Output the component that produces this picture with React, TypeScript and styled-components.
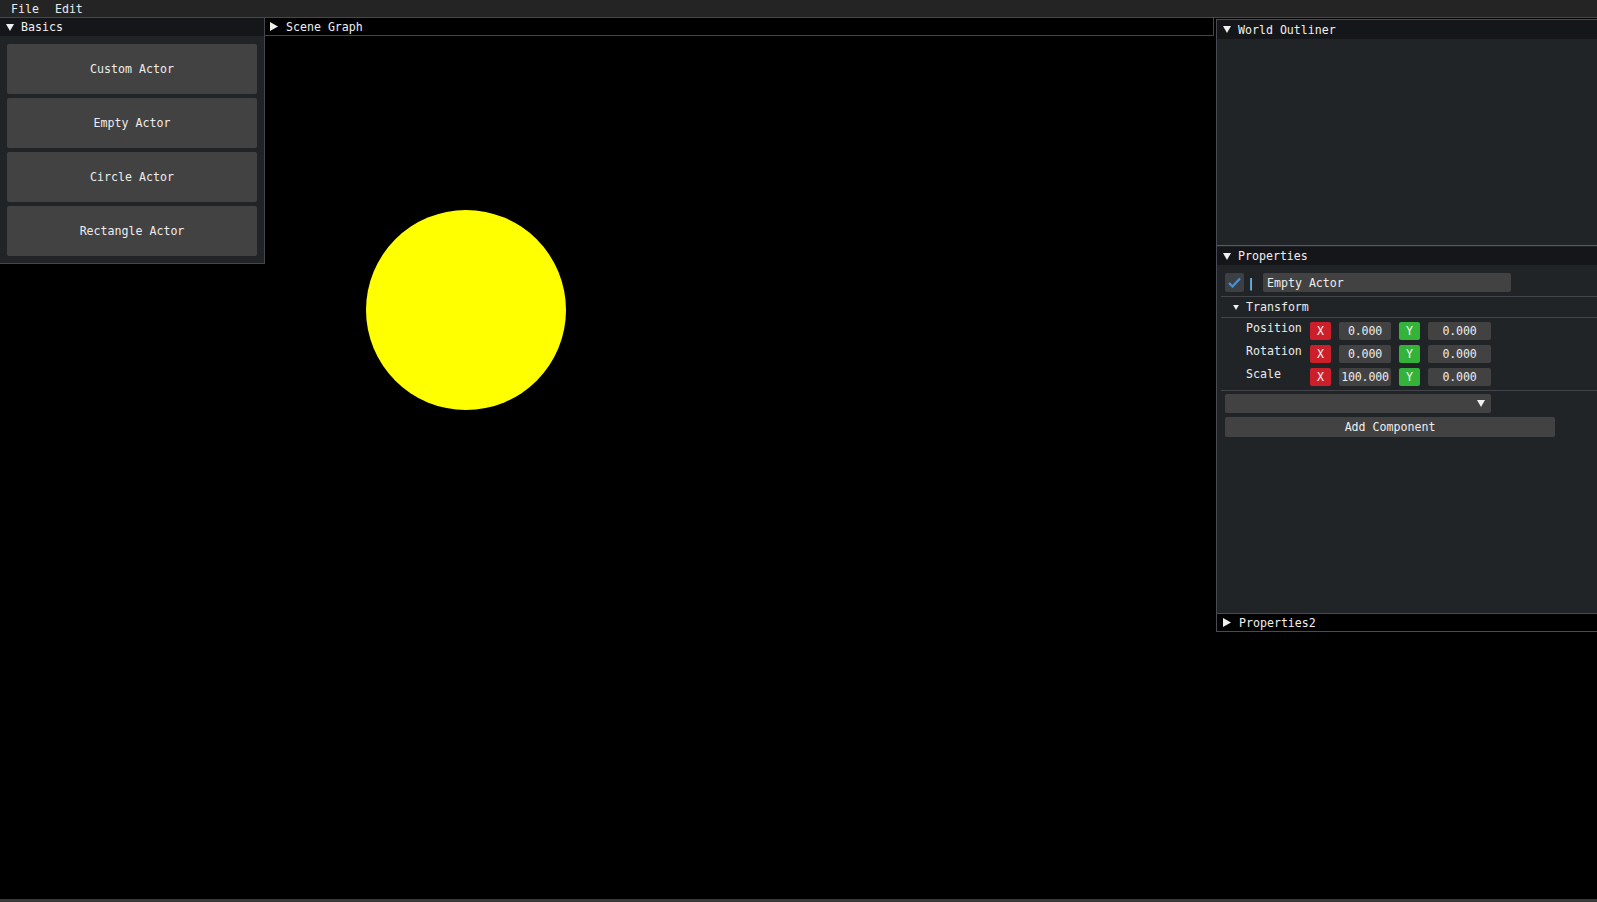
import React from "react";
import styled, { createGlobalStyle } from "styled-components";

const GlobalStyle = createGlobalStyle`
  html, body { margin: 0; padding: 0; background: #000; }
  body { font-family: "DejaVu Sans Mono", "Liberation Mono", monospace; font-size: 11.6px; color: #ebebeb; }
  * { box-sizing: border-box; }
`;

const Screen = styled.div`
  width: 1597px;
  height: 902px;
  display: flex;
  flex-direction: column;
  overflow: hidden;
  background: #000;
`;

const MenuBar = styled.div`
  height: 18px;
  flex: none;
  background: #242424;
  border-bottom: 1px solid #484848;
  display: flex;
  align-items: center;
  padding: 1px 0 0 11px;
  gap: 16px;
  line-height: 16px;
`;

const MenuItem = styled.span`
  color: #ebebeb;
`;

const Desktop = styled.div`
  flex: 1;
  position: relative;
  background: #000;
  display: flex;
  align-items: flex-start;
`;

const Sun = styled.div`
  position: absolute;
  left: 366px;
  top: 192px;
  width: 200px;
  height: 200px;
  border-radius: 50%;
  background: #ffff00;
`;

const Window = styled.div<{ $w: number; $h?: number; $bg?: string }>`
  width: ${(p) => p.$w}px;
  height: ${(p) => (p.$h ? `${p.$h}px` : "auto")};
  flex: none;
  display: flex;
  flex-direction: column;
  background: ${(p) => p.$bg || "#212427"};
  border-right: 1px solid #45454c;
  border-bottom: 1px solid #45454c;
  position: relative;
  z-index: 1;
`;

const TitleBar = styled.div<{ $bg?: string; $h?: number }>`
  height: ${(p) => p.$h ?? 18}px;
  flex: none;
  display: flex;
  align-items: center;
  gap: 7px;
  padding-left: 6px;
  background: ${(p) => p.$bg || "#151619"};
  color: #f0f0f0;
  white-space: nowrap;
`;

const ButtonList = styled.div`
  display: flex;
  flex-direction: column;
  gap: 4px;
  padding: 8px 7px 6px 7px;
`;

const BigButton = styled.div`
  height: 50px;
  background: #424242;
  border-radius: 2px;
  display: flex;
  align-items: center;
  justify-content: center;
  color: #ededed;
`;

const RightColumn = styled.div`
  margin-left: 2px;
  margin-top: 1px;
  display: flex;
  flex-direction: column;
  width: 381px;
  flex: none;
`;

const Panel = styled.div<{ $h: number; $topColor?: string; $bg?: string; $bottom?: boolean }>`
  height: ${(p) => p.$h}px;
  display: flex;
  flex-direction: column;
  overflow: hidden;
  background: ${(p) => p.$bg || "#212427"};
  border-left: 1px solid #4a4a52;
  border-top: 1px solid ${(p) => p.$topColor || "#4a4a52"};
  border-bottom: ${(p) => (p.$bottom ? "1px solid #4a4a52" : "none")};
`;

const PanelBody = styled.div`
  flex: 1;
  display: flex;
  flex-direction: column;
  padding: 8px 0 0 8px;
`;

const Row = styled.div<{ $gap?: number }>`
  display: flex;
  align-items: center;
  gap: ${(p) => p.$gap ?? 8}px;
`;

const CheckBox = styled.div`
  width: 19px;
  height: 19px;
  background: #3c3f44;
  border-radius: 2px;
  display: flex;
  align-items: center;
  justify-content: center;
`;

const Bar = styled.span`
  width: 14px;
  text-align: center;
  color: #ebebeb;
`;

const TextInput = styled.div<{ $w: number }>`
  width: ${(p) => p.$w}px;
  height: 19px;
  margin-left: 5px;
  background: #424242;
  border-radius: 2px;
  display: flex;
  align-items: center;
  padding-left: 4px;
  color: #ededed;
  white-space: nowrap;
`;

const Separator = styled.div<{ $mt: number; $mb: number }>`
  height: 1px;
  background: #44454b;
  margin: ${(p) => p.$mt}px 0 ${(p) => p.$mb}px -4px;
`;

const TreeHeader = styled.div`
  display: flex;
  align-items: center;
  gap: 7px;
  padding-left: 8px;
  height: 14px;
`;

const TransformRows = styled.div`
  display: flex;
  flex-direction: column;
  gap: 5px;
  padding-left: 21px;
  margin-top: 1px;
`;

const Label = styled.div`
  width: 56px;
  align-self: flex-start;
  line-height: 13px;
  color: #ebebeb;
`;

const AxisButton = styled.div<{ $color: string }>`
  width: 21px;
  height: 18px;
  background: ${(p) => p.$color};
  border-radius: 2px;
  display: flex;
  align-items: center;
  justify-content: center;
  color: #f4f4f4;
`;

const Field = styled.div<{ $w: number }>`
  width: ${(p) => p.$w}px;
  height: 18px;
  background: #424242;
  border-radius: 2px;
  display: flex;
  align-items: center;
  justify-content: center;
  color: #ededed;
  white-space: nowrap;
  letter-spacing: -0.2px;
`;

const Combo = styled.div`
  width: 266px;
  height: 19px;
  background: #424242;
  border-radius: 2px;
  display: flex;
  align-items: center;
  justify-content: flex-end;
  padding-right: 6px;
`;

const WideButton = styled.div`
  width: 330px;
  height: 20px;
  margin-top: 4px;
  background: #424242;
  border-radius: 2px;
  display: flex;
  align-items: center;
  justify-content: center;
  color: #ededed;
`;

const BottomLine = styled.div`
  position: absolute;
  left: 0;
  right: 0;
  bottom: 0;
  height: 3px;
  background: #3a3a3a;
`;

const DownTri = ({ size = 8 }: { size?: number }) => (
  <svg width={size} height={size - 1} viewBox="0 0 8 7" style={{ display: "block", flex: "none" }}>
    <polygon points="0,0 8,0 4,7" fill="#f0f0f0" />
  </svg>
);

const RightTri = () => (
  <svg width={8} height={9} viewBox="0 0 8 9" style={{ display: "block", flex: "none" }}>
    <polygon points="0,0 8,4.5 0,9" fill="#f0f0f0" />
  </svg>
);

const Check = () => (
  <svg width={13} height={11} viewBox="0 0 13 11">
    <polyline points="1,6 4.5,9.5 12,1.5" fill="none" stroke="#3d95ea" strokeWidth={2.2} />
  </svg>
);

const transform = [
  { label: "Position", x: "0.000", y: "0.000" },
  { label: "Rotation", x: "0.000", y: "0.000" },
  { label: "Scale", x: "100.000", y: "0.000" },
];

export default function App() {
  return (
    <>
      <GlobalStyle />
      <Screen>
        <MenuBar>
          <MenuItem>File</MenuItem>
          <MenuItem>Edit</MenuItem>
        </MenuBar>
        <Desktop>
          <Sun />
          <Window $w={265} $h={246}>
            <TitleBar>
              <DownTri />
              <span>Basics</span>
            </TitleBar>
            <ButtonList>
              <BigButton>Custom Actor</BigButton>
              <BigButton>Empty Actor</BigButton>
              <BigButton>Circle Actor</BigButton>
              <BigButton>Rectangle Actor</BigButton>
            </ButtonList>
          </Window>
          <Window $w={949} $bg="#000">
            <TitleBar $bg="#000" $h={17} style={{ paddingLeft: 5, gap: 8 }}>
              <RightTri />
              <span>Scene Graph</span>
            </TitleBar>
          </Window>
          <RightColumn>
            <Panel $h={226}>
              <TitleBar $h={19}>
                <DownTri />
                <span>World Outliner</span>
              </TitleBar>
            </Panel>
            <Panel $h={368} $topColor="#5a5a62">
              <TitleBar style={{ marginTop: 1 }}>
                <DownTri />
                <span>Properties</span>
              </TitleBar>
              <PanelBody>
                <Row $gap={0}>
                  <CheckBox>
                    <Check />
                  </CheckBox>
                  <Bar>|</Bar>
                  <TextInput $w={248}>Empty Actor</TextInput>
                </Row>
                <Separator $mt={4} $mb={3} />
                <TreeHeader>
                  <DownTri size={6} />
                  <span>Transform</span>
                </TreeHeader>
                <Separator $mt={3} $mb={3} />
                <TransformRows>
                  {transform.map((r) => (
                    <Row key={r.label}>
                      <Label>{r.label}</Label>
                      <AxisButton $color="#cc1f2a">X</AxisButton>
                      <Field $w={52}>{r.x}</Field>
                      <AxisButton $color="#33b33a">Y</AxisButton>
                      <Field $w={63}>{r.y}</Field>
                    </Row>
                  ))}
                </TransformRows>
                <Separator $mt={4} $mb={3} />
                <Combo>
                  <DownTri />
                </Combo>
                <WideButton>Add Component</WideButton>
              </PanelBody>
            </Panel>
            <Panel $h={19} $bg="#000" $bottom>
              <TitleBar $bg="#000" $h={17} style={{ gap: 8 }}>
                <RightTri />
                <span>Properties2</span>
              </TitleBar>
            </Panel>
          </RightColumn>
          <BottomLine />
        </Desktop>
      </Screen>
    </>
  );
}
